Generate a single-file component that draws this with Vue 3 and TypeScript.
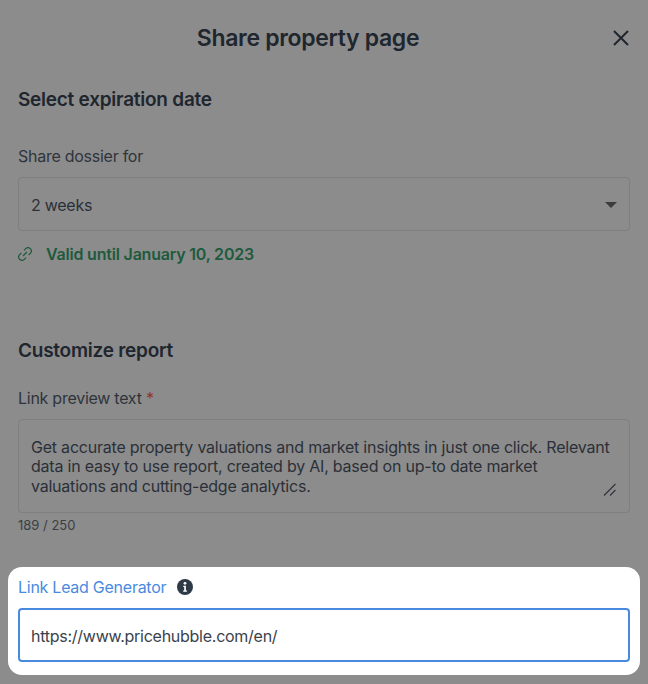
<script setup lang="ts">
const previewText =
  'Get accurate property valuations and market insights in just one click. Relevant data in easy to use report, created by AI, based on up-to date market valuations and cutting-edge analytics.'
</script>

<template>
  <div class="page">
    <header class="header">
      <h1 class="title">Share property page</h1>
      <svg class="close" width="16" height="16" viewBox="0 0 16 16">
        <path d="M1 1l14 14M15 1L1 15" />
      </svg>
    </header>

    <section class="section expiry">
      <h2 class="heading">Select expiration date</h2>
      <div class="label">Share dossier for</div>
      <div class="field select">
        <span>2 weeks</span>
        <span class="caret" />
      </div>
      <div class="valid">
        <svg class="link-icon" width="14" height="14" viewBox="0 0 14 14">
          <path d="M5 9l4-4" />
          <path d="M6 3.4l1.7-1.7a3 3 0 0 1 4.6 4.6l-1.7 1.7" />
          <path d="M8 10.6l-1.7 1.7a3 3 0 0 1-4.6-4.6l1.7-1.7" />
        </svg>
        <span>Valid until January 10, 2023</span>
      </div>
    </section>

    <section class="section report">
      <h2 class="heading">Customize report</h2>
      <div class="label">Link preview text <span class="req">*</span></div>
      <div class="field textarea">
        {{ previewText }}
        <svg class="grip" width="13" height="13" viewBox="0 0 13 13">
          <path d="M1 12.5L12.5 1M7 12.5L12.5 7" />
        </svg>
      </div>
      <div class="count">189 / 250</div>
    </section>

    <section class="highlight">
      <div class="lead-label">
        <span>Link Lead Generator</span>
        <svg width="16" height="16" viewBox="0 0 16 16">
          <circle cx="8" cy="8" r="8" fill="#2f3a47" />
          <circle cx="8" cy="4.3" r="1.4" fill="#fff" />
          <path d="M6.3 6.8h2.6v4.6h1v1.3H6.2v-1.3h1V8.1h-.9z" fill="#fff" />
        </svg>
      </div>
      <div class="field url">https://www.pricehubble.com/en/</div>
    </section>
  </div>
</template>

<style>
html,
body {
  margin: 0;
  background: #8c8c8c;
}
</style>

<style scoped>
.page {
  width: 648px;
  height: 684px;
  box-sizing: border-box;
  overflow: hidden;
  position: relative;
  background: #8c8c8c;
  font-family: Inter, 'Liberation Sans', sans-serif;
  font-size: 16px;
  line-height: 20px;
  letter-spacing: -0.26px;
  color: #2b3038;
}

.header {
  height: 24px;
  padding-top: 26px;
  position: relative;
}

.title {
  margin: 0;
  padding-right: 32px;
  text-align: center;
  font-size: 23px;
  line-height: 24px;
  font-weight: 600;
  letter-spacing: -0.32px;
  color: #20262e;
}

.close {
  position: absolute;
  top: 30px;
  right: 19px;
  fill: none;
  stroke: #20262e;
  stroke-width: 2;
}

.section {
  padding: 0 18px;
}

.expiry {
  margin-top: 38px;
}

.report {
  margin-top: 75px;
}

.heading {
  margin: 0;
  font-size: 19px;
  line-height: 24px;
  font-weight: 600;
  letter-spacing: -0.25px;
  color: #20262e;
}

.label {
  margin-top: 34px;
  color: #2f343c;
}

.report .label {
  margin-top: 25px;
}

.req {
  color: #8c3a24;
}

.field {
  box-sizing: border-box;
  border: 1px solid #7f7f7f;
  border-radius: 4px;
  padding: 0 12px;
}

.select {
  margin-top: 11px;
  height: 54px;
  padding-top: 1px;
  display: flex;
  align-items: center;
  justify-content: space-between;
}

.caret {
  width: 0;
  height: 0;
  border-left: 6px solid transparent;
  border-right: 6px solid transparent;
  border-top: 6px solid #3c3c3c;
}

.valid {
  margin-top: 13px;
  display: flex;
  align-items: center;
  gap: 14px;
  font-weight: 600;
  letter-spacing: -0.2px;
  color: #1f5a3c;
}

.link-icon {
  fill: none;
  stroke: #1f5a3c;
  stroke-width: 1.2;
}

.textarea {
  margin-top: 11px;
  height: 94px;
  padding: 17.5px 16px 0 12px;
  line-height: 19.6px;
  letter-spacing: -0.22px;
  position: relative;
}

.grip {
  position: absolute;
  right: 13px;
  bottom: 16px;
  fill: none;
  stroke: #2f343c;
  stroke-width: 1.1;
}

.count {
  margin-top: 3px;
  font-size: 13px;
  line-height: 18px;
  letter-spacing: 0;
  color: #3a3f46;
}

.highlight {
  position: absolute;
  left: 8px;
  top: 567px;
  width: 632px;
  height: 108px;
  box-sizing: border-box;
  padding: 10px 10px 0;
  background: #fff;
  border-radius: 14px;
}

.lead-label {
  display: flex;
  align-items: center;
  gap: 11px;
  color: #4a8ade;
}

.url {
  margin-top: 11px;
  height: 54px;
  display: flex;
  align-items: center;
  border: 2px solid #4a8ade;
  padding: 2px 11px 0;
  color: #3a424c;
}
</style>
